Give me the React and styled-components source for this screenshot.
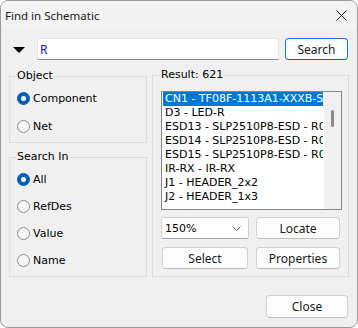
import React from "react";
import styled, { createGlobalStyle } from "styled-components";

const GlobalStyle = createGlobalStyle`
  html, body { margin: 0; padding: 0; background: #ffffff; }
  * { box-sizing: border-box; }
`;

const Window = styled.div`
  width: 358px;
  height: 328px;
  border: 1px solid #9a9a9a;
  border-radius: 8px;
  background: #f0f0f0;
  overflow: hidden;
  display: flex;
  flex-direction: column;
  font-family: "DejaVu Sans", sans-serif;
  font-size: 11px;
  color: #000;
`;

const TitleBar = styled.div`
  height: 28px;
  flex: none;
  display: flex;
  align-items: center;
  justify-content: space-between;
  padding: 0 10px 0 4px;
  background: #f3f3f3;
  font-family: "Noto Sans", sans-serif;
  font-size: 11.5px;
  color: #1a1a1a;
`;

const SearchRow = styled.div`
  display: flex;
  align-items: center;
  height: 22px;
  margin-top: 9px;
  padding-left: 12px;
`;

const Caret = styled.div`
  width: 0;
  height: 0;
  border-left: 6px solid transparent;
  border-right: 6px solid transparent;
  border-top: 6px solid #000;
  margin-top: 2px;
`;

const TextInput = styled.div`
  width: 242px;
  height: 22px;
  margin-left: 12px;
  background: #ffffff;
  border: 1px solid #e6e6e6;
  border-bottom: 1px solid #8a8a8a;
  border-radius: 3px 3px 0 0;
  display: flex;
  align-items: center;
  padding-left: 2px;
  font-family: "Noto Sans", sans-serif;
  font-size: 12px;
  color: #1010d0;
`;

const Button = styled.div`
  width: ${(p) => p.$w}px;
  height: ${(p) => p.$h || 22}px;
  margin-left: ${(p) => p.$ml || 0}px;
  background: #fdfdfd;
  border: 1px solid ${(p) => (p.$default ? "#1a73c8" : "#d0d0d0")};
  border-bottom-color: ${(p) => (p.$default ? "#0f5fb0" : "#bdbdbd")};
  border-radius: 4px;
  display: flex;
  align-items: center;
  justify-content: center;
  font-family: "Noto Sans", sans-serif;
  font-size: 12px;
  color: #1a1a1a;
`;

const Main = styled.div`
  display: flex;
  margin-top: 8px;
  padding-left: 8px;
  gap: 5px;
`;

const LeftColumn = styled.div`
  width: 138px;
  display: flex;
  flex-direction: column;
  gap: 7px;
  padding-top: 1px;
`;

const Group = styled.fieldset`
  margin: 0;
  width: ${(p) => p.$w}px;
  height: ${(p) => p.$h}px;
  border: 1px solid #dcdcdc;
  border-radius: 0;
  padding: ${(p) => p.$pad || "0 0 0 7px"};
  min-width: 0;
`;

const Legend = styled.legend`
  padding: 0 1px;
  margin-left: -1px;
  line-height: 14px;
  font-size: 11px;
`;

const RadioRow = styled.div`
  height: ${(p) => p.$h}px;
  display: flex;
  align-items: center;
  gap: 3px;
`;

const RadioCircle = styled.span`
  width: 13px;
  height: 13px;
  border-radius: 50%;
  flex: none;
  display: flex;
  align-items: center;
  justify-content: center;
  background: ${(p) => (p.$on ? "#005fb8" : "#f6f6f6")};
  border: 1px solid ${(p) => (p.$on ? "#005fb8" : "#8d8d8d")};
  &::after {
    content: "";
    display: ${(p) => (p.$on ? "block" : "none")};
    width: 5px;
    height: 5px;
    border-radius: 50%;
    background: #ffffff;
  }
`;

const ListBox = styled.div`
  width: 181px;
  height: 119px;
  margin-top: 9px;
  border: 1px solid #828790;
  background: #ffffff;
  display: flex;
`;

const Items = styled.div`
  flex: 1;
  padding: 0 1px;
  overflow: hidden;
`;

const Item = styled.div`
  height: 14px;
  line-height: 14px;
  padding-left: 2px;
  white-space: nowrap;
  overflow: hidden;
  font-size: 11px;
  background: ${(p) => (p.$sel ? "#0078d7" : "transparent")};
  color: ${(p) => (p.$sel ? "#ffffff" : "#000000")};
`;

const ScrollTrack = styled.div`
  width: 17px;
  flex: none;
  background: #f0f0f0;
  display: flex;
  justify-content: center;
  padding-top: 18px;
`;

const Thumb = styled.div`
  width: 3px;
  height: 17px;
  border-radius: 2px;
  background: #8a8a8a;
`;

const Controls = styled.div`
  display: grid;
  grid-template-columns: 88px 84px;
  column-gap: 7px;
  row-gap: 8px;
  margin-top: 7px;
`;

const Combo = styled.div`
  height: 22px;
  background: #ffffff;
  border: 1px solid #d0d0d0;
  border-bottom-color: #a8a8a8;
  border-radius: 3px;
  display: flex;
  align-items: center;
  justify-content: space-between;
  padding: 0 7px 0 3px;
  font-size: 11px;
`;

const Footer = styled.div`
  display: flex;
  justify-content: flex-end;
  padding-right: 9px;
  margin-top: 18px;
`;

const CloseIcon = () => (
  <svg width="11" height="11" viewBox="0 0 11 11">
    <path d="M0.5 0.5 L10.5 10.5 M10.5 0.5 L0.5 10.5" stroke="#1a1a1a" strokeWidth="1" />
  </svg>
);

const Chevron = () => (
  <svg width="9" height="5" viewBox="0 0 9 5">
    <path d="M0.5 0.5 L4.5 4.5 L8.5 0.5" stroke="#606060" strokeWidth="1" fill="none" />
  </svg>
);

const Radio = ({ label, on, h }) => (
  <RadioRow $h={h}>
    <RadioCircle $on={on} />
    <span>{label}</span>
  </RadioRow>
);

const results = [
  "CN1 - TF08F-1113A1-XXXB-SMD",
  "D3 - LED-R",
  "ESD13 - SLP2510P8-ESD - R0402",
  "ESD14 - SLP2510P8-ESD - R0402",
  "ESD15 - SLP2510P8-ESD - R0402",
  "IR-RX - IR-RX",
  "J1 - HEADER_2x2",
  "J2 - HEADER_1x3",
];

export default function App() {
  return (
    <>
      <GlobalStyle />
      <Window>
        <TitleBar>
          <span>Find in Schematic</span>
          <CloseIcon />
        </TitleBar>

        <SearchRow>
          <Caret />
          <TextInput>R</TextInput>
          <Button $w={63} $ml={6} $default>
            Search
          </Button>
        </SearchRow>

        <Main>
          <LeftColumn>
            <Group $w={138} $h={74} $pad="1px 0 0 7px">
              <Legend>Object</Legend>
              <Radio label="Component" on h={28} />
              <Radio label="Net" h={28} />
            </Group>
            <Group $w={138} $h={127} $pad="2px 0 0 7px">
              <Legend>Search In</Legend>
              <Radio label="All" on h={27} />
              <Radio label="RefDes" h={27} />
              <Radio label="Value" h={27} />
              <Radio label="Name" h={27} />
            </Group>
          </LeftColumn>

          <Group $w={197} $h={209} $pad="0 0 0 8px">
            <Legend>Result: 621</Legend>
            <ListBox>
              <Items>
                {results.map((r, i) => (
                  <Item key={r} $sel={i === 0}>
                    {r}
                  </Item>
                ))}
              </Items>
              <ScrollTrack>
                <Thumb />
              </ScrollTrack>
            </ListBox>
            <Controls>
              <Combo>
                <span>150%</span>
                <Chevron />
              </Combo>
              <Button $w={84}>Locate</Button>
              <Button $w={86} $ml={1}>Select</Button>
              <Button $w={84}>Properties</Button>
            </Controls>
          </Group>
        </Main>

        <Footer>
          <Button $w={82} $h={23}>
            Close
          </Button>
        </Footer>
      </Window>
    </>
  );
}
